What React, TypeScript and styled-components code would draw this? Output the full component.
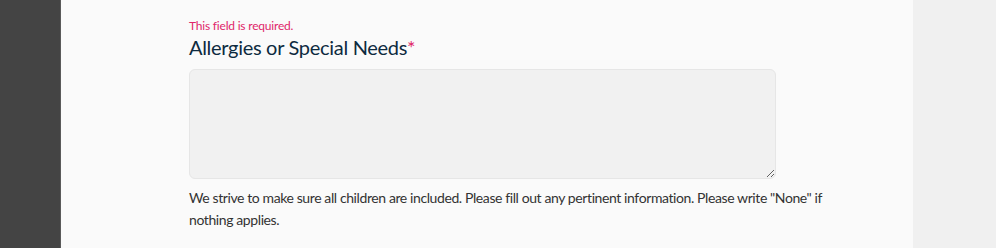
import styled, { createGlobalStyle } from 'styled-components'

const GlobalStyle = createGlobalStyle`
  html, body {
    margin: 0;
    padding: 0;
    background: #f0f0f0;
  }
  body {
    font-family: Lato, "Liberation Sans", sans-serif;
  }
`

const Page = styled.div`
  display: flex;
  height: 248px;
  overflow: hidden;
`

const Sidebar = styled.div`
  width: 60px;
  flex-shrink: 0;
  background: #444444;
  border-right: 1px solid #5a5a5a;
`

const Main = styled.main`
  width: 852px;
  flex-shrink: 0;
  background: #fafafa;
  padding: 18px 0 0 128px;
  box-sizing: border-box;
`

const Aside = styled.div`
  flex: 1;
  background: #f0f0f0;
`

const Field = styled.div`
  width: 660px;
`

const ErrorText = styled.div`
  color: #e0266a;
  font-size: 12px;
  line-height: 16px;
  letter-spacing: -0.2px;
`

const Label = styled.label`
  display: block;
  color: #0d2a40;
  font-size: 20px;
  line-height: 26px;
  letter-spacing: -0.3px;
  margin-bottom: 9px;
`

const Required = styled.span`
  color: #e0266a;
`

const TextArea = styled.textarea`
  display: block;
  width: 587px;
  height: 110px;
  box-sizing: border-box;
  background: #f1f1f1;
  border: 1px solid #e6e6e6;
  border-radius: 6px;
  padding: 8px 10px;
  font-family: inherit;
  font-size: 14px;
  resize: vertical;
  outline: none;
`

const HelpText = styled.p`
  margin: 8px 0 0;
  color: #333333;
  font-size: 14px;
  line-height: 22px;
  letter-spacing: -0.4px;
`

function App() {
  return (
    <>
      <GlobalStyle />
      <Page>
        <Sidebar />
        <Main>
          <Field>
            <ErrorText>This field is required.</ErrorText>
            <Label htmlFor="allergies">
              Allergies or Special Needs<Required>*</Required>
            </Label>
            <TextArea id="allergies" />
            <HelpText>
              We strive to make sure all children are included. Please fill out any pertinent
              information. Please write "None" if nothing applies.
            </HelpText>
          </Field>
        </Main>
        <Aside />
      </Page>
    </>
  )
}

export default App
